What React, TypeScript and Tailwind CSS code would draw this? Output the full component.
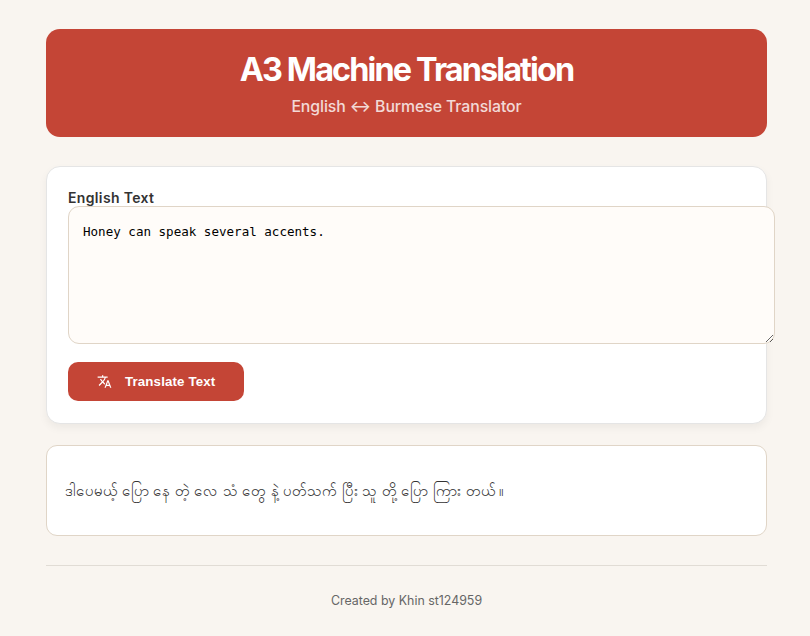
export default function App() {
  return (
    <div className="min-h-[636px] overflow-hidden bg-[#f9f5f0] pt-[29px] pr-[43px] pl-[46px] font-['Inter','Liberation_Sans',sans-serif] text-[#333]">
      <header className="flex h-[108px] flex-col items-center rounded-[14px] bg-[#c44536] pt-[20px] text-white">
        <h1 className="text-[32.4px] leading-[42px] font-bold tracking-[-1.87px] whitespace-nowrap">A3 Machine Translation</h1>
        <p className="mt-[6px] text-[15.8px] leading-[20px] font-medium tracking-[-0.07px] whitespace-nowrap opacity-80">English ↔ Burmese Translator</p>
      </header>

      <main>
        <section className="mt-[29px] h-[258px] rounded-[14px] border border-[#e5e5e5] bg-white pt-[22px] pl-[21px] shadow-[0_4px_8px_rgba(0,0,0,0.05)]">
          <label htmlFor="source" className="block h-[17px] text-[14px] leading-[18px] font-semibold tracking-[0.35px]">English Text</label>
          <textarea
            id="source"
            defaultValue="Honey can speak several accents."
            spellCheck={false}
            className="block h-[138px] w-[707px] resize rounded-[11px] border border-[#e0d5c7] bg-[#fffcf9] px-[14px] py-[16px] font-['DejaVu_Sans_Mono',monospace] text-[12.55px] leading-[17px] text-black outline-none"
          />
          <button className="mt-[18px] flex h-[39px] w-[176px] items-center rounded-[10px] bg-[#c44536] pl-[29px] text-white">
            <svg className="h-[15px] w-[15px]" viewBox="0 0 24 24" fill="currentColor" aria-hidden="true">
              <path d="m12.87 15.07-2.54-2.51.03-.03A17.52 17.52 0 0 0 14.07 6H17V4h-7V2H8v2H1v1.99h11.17C11.5 7.92 10.44 9.75 9 11.35 8.07 10.32 7.3 9.19 6.69 8h-2c.73 1.63 1.73 3.17 2.98 4.56l-5.09 5.02L4 19l5-5 3.11 3.11.76-2.04zM18.5 10h-2L12 22h2l1.12-3h4.75L21 22h2l-4.5-12zm-2.62 7 1.62-4.33L19.12 17h-3.24z" />
            </svg>
            <span className="ml-[13px] font-['Liberation_Sans',sans-serif] text-[13.3px] leading-[18px] font-bold tracking-[0.13px] whitespace-nowrap">Translate Text</span>
          </button>
        </section>

        <section className="mt-[21px] flex h-[91px] items-center rounded-[11px] border border-[#e0d5c7] bg-white pl-[18px]">
          <p lang="my" className="text-[15px] leading-[24px] [word-spacing:0.32px] whitespace-nowrap">ဒါပေမယ့် ပြော နေ တဲ့ လေ သံ တွေ နဲ့ ပတ်သက် ပြီး သူ တို့ ပြော ကြား တယ် ။</p>
        </section>
      </main>

      <footer className="mt-[29px] border-t border-[#e1dcd5] pt-[26px] text-center text-[12.4px] leading-[18px] text-[#666]">Created by Khin st124959</footer>
    </div>
  );
}
